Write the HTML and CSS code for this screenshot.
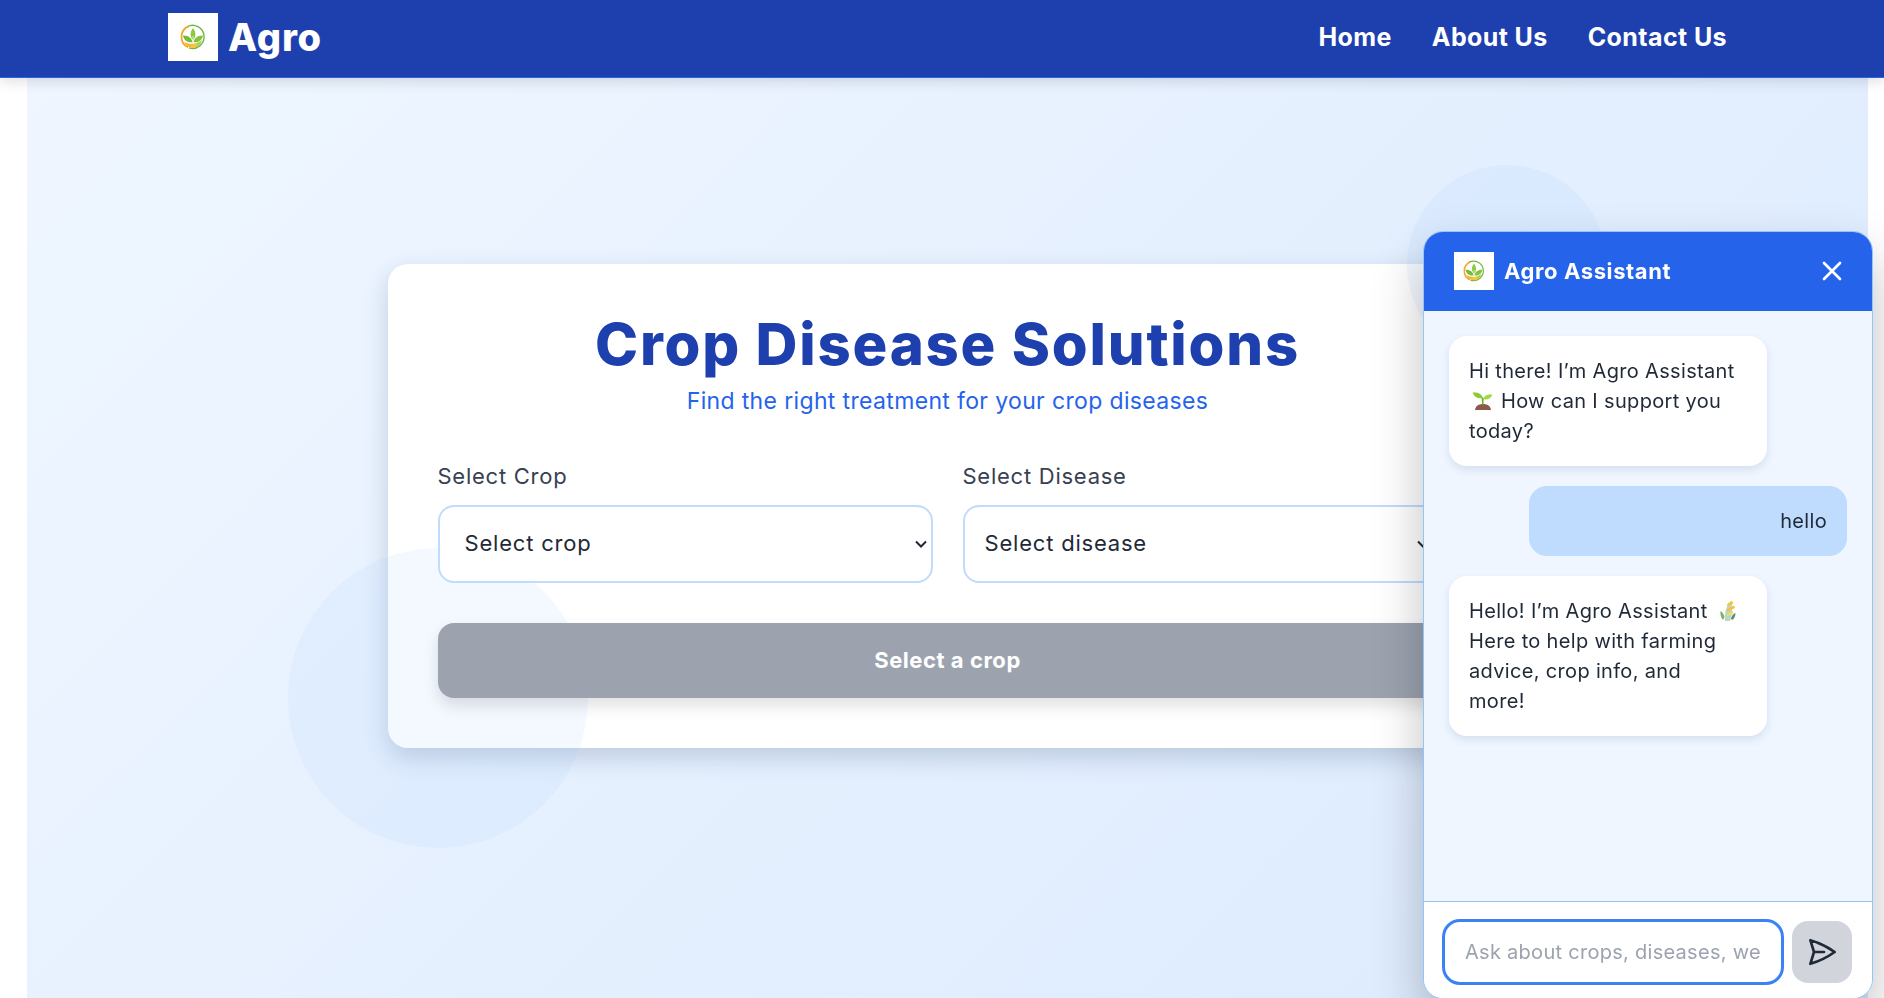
FILE: index.html
```html
<!DOCTYPE html>
<html lang="en">
<head>
    <meta charset="UTF-8">
    <meta name="viewport" content="width=device-width, initial-scale=1.0">
    <title>Agro - Crop Disease Solutions</title>
    <link rel="stylesheet" href="styles.css">
</head>
<body>
    <svg class="defs" width="0" height="0" aria-hidden="true">
        <defs>
            <linearGradient id="ring" x1="0" y1="0" x2="1" y2="0">
                <stop offset="0" stop-color="#f5a623"/>
                <stop offset="0.6" stop-color="#f6c945"/>
                <stop offset="1" stop-color="#8cc63f"/>
            </linearGradient>
            <symbol id="agro-logo" viewBox="0 0 26 26">
                <path d="M7 2.800A11.500 11.500 0 1 1 9 23.800" fill="none" stroke="#6cb83f" stroke-width="1.400"/>
                <path d="M8.500 2.400A11.500 11.500 0 0 0 8 23.300" fill="none" stroke="#f4a62a" stroke-width="1.800"/>
                <path d="M4 17.500c4 3 11 3.500 18-1-2 5.500-6.500 8-10 7.500-3.500-.5-6.500-3-8-6.500z" fill="url(#ring)"/>
                <path d="M13 16c-3-3-3.500-7.500 0-12 3.500 4.500 3 9 0 12z" fill="#8fc93f"/>
                <path d="M12.600 18c-1-4-4.600-7-9.600-6.500.8 4.800 5 7.800 9.600 6.500z" fill="#74bb3c"/>
                <path d="M13.400 18c1-4 4.600-7 9.600-6.500-.8 4.800-5 7.800-9.600 6.500z" fill="#82c341"/>
                <path d="M13 12v7" stroke="#e4f2cf" stroke-width=".8"/>
            </symbol>
        </defs>
    </svg>

    <header class="navbar">
        <div class="brand">
            <span class="brand-logo"><svg width="26" height="26"><use href="#agro-logo"/></svg></span>
            <span class="brand-name">Agro</span>
        </div>
        <nav class="nav-links">
            <a href="#">Home</a>
            <a href="#">About Us</a>
            <a href="#">Contact Us</a>
        </nav>
    </header>

    <main class="hero">
        <section class="card">
            <h1>Crop Disease Solutions</h1>
            <p class="subtitle">Find the right treatment for your crop diseases</p>
            <div class="fields">
                <div class="field">
                    <label for="crop">Select Crop</label>
                    <div class="select-wrap crop-wrap">
                        <select id="crop">
                            <option>Select crop</option>
                        </select>
                        <svg class="chevron" width="12" height="8" viewBox="0 0 12 8" fill="none" stroke="#1f2937" stroke-width="2"><path d="M1 1.500l5 5 5-5"/></svg>
                    </div>
                </div>
                <div class="field">
                    <label for="disease">Select Disease</label>
                    <div class="select-wrap disease-wrap">
                        <select id="disease">
                            <option>Select disease</option>
                        </select>
                        <svg class="chevron" width="12" height="8" viewBox="0 0 12 8" fill="none" stroke="#1f2937" stroke-width="2"><path d="M1 1.500l5 5 5-5"/></svg>
                    </div>
                </div>
            </div>
            <button class="submit-btn" disabled>Select a crop</button>
        </section>
        <div class="circle circle-left"></div>
        <div class="circle circle-right"></div>
    </main>

    <aside class="chat">
        <div class="chat-header">
            <div class="chat-title">
                <span class="chat-logo"><svg width="22" height="22"><use href="#agro-logo"/></svg></span>
                <span>Agro Assistant</span>
            </div>
            <svg class="chat-close" width="32" height="32" viewBox="0 0 24 24" fill="none" stroke="#fff" stroke-width="2" stroke-linecap="round"><path d="M6 18 18 6M6 6l12 12"/></svg>
        </div>
        <div class="chat-messages">
            <div class="msg msg-bot">Hi there! I’m Agro Assistant
                <svg class="emoji" width="24" height="24" viewBox="0 0 24 24"><path d="M4 21c.5-4 3.500-6 8-6s7.500 2 8 6z" fill="#8b5a4a"/><path d="M11 16c0-3 0-5-.5-7h2.500c-.5 2-.5 4-.5 7z" fill="#6fae2c"/><path d="M12 9C11 5 7 3 1.500 3.500 3 8 7 10 12 9z" fill="#8ccb32"/><path d="M12 10c1-3 4-5 9.500-4.500C20 9.500 16 11.500 12 10z" fill="#a3d93a"/></svg>
                How can I support you today?</div>
            <div class="msg msg-user">hello</div>
            <div class="msg msg-bot">Hello! I’m Agro Assistant
                <svg class="emoji" width="24" height="24" viewBox="0 0 24 24"><path d="M7 21c-2-2-3-6-2.500-9 2 1 3.500 3.500 4 6z" fill="#7fb069"/><path d="M16 21c2-1 3.500-4 3.500-7-2 .5-4 3-4.500 5.500z" fill="#4f8f7a"/><path d="M9 22c-.5-7 .5-15 6-20 2 4 1.500 13-1 20z" fill="#b7d8c4"/><path d="M11 5l5-3 1.500 2.500-6 2.500zM11 10l7-3.500 1 2.500-8 3.500z" fill="#fbc02d"/><path d="M11 15l6-3 .5 2.500-6.500 3z" fill="#fdd663"/></svg>
                Here to help with farming advice, crop info, and more!</div>
        </div>
        <div class="chat-input">
            <input type="text" placeholder="Ask about crops, diseases, weather...">
            <button class="send-btn" aria-label="Send">
                <svg width="32" height="32" viewBox="0 0 24 24" fill="none" stroke="#1f2937" stroke-width="2" stroke-linecap="round" stroke-linejoin="round"><path d="M6 12 3.269 3.125A59.769 59.769 0 0 1 21.485 12 59.768 59.768 0 0 1 3.270 20.875L5.999 12Zm0 0h7.500"/></svg>
            </button>
        </div>
    </aside>
</body>
</html>
```

FILE: styles.css
```css
* {
    box-sizing: border-box;
}
html, body {
    height: 100%;
}
body {
    margin: 0;
    background: #fff;
    font-family: 'Inter', 'Open Sans', sans-serif;
    color: #1f2937;
    overflow: hidden;
}
.defs {
    display: block;
    height: 0;
}
.navbar {
    position: relative;
    z-index: 5;
    height: 78px;
    padding: 0 157px 3px 168px;
    display: flex;
    justify-content: space-between;
    align-items: center;
    background: #1e40af;
    border-bottom: 1px solid #2563eb;
    box-shadow: 0 4px 12px rgba(0, 0, 0, 0.12);
}
.brand {
    display: flex;
    align-items: center;
    gap: 10px;
}
.brand-logo {
    width: 50px;
    height: 48px;
    background: #fff;
    display: flex;
    justify-content: center;
    align-items: center;
}
.brand-name {
    font-size: 38px;
    font-weight: 800;
    letter-spacing: 0.8px;
    color: #fff;
}
.nav-links {
    display: flex;
    gap: 40px;
}
.nav-links a {
    font-size: 25px;
    font-weight: 700;
    letter-spacing: 0.4px;
    color: #fff;
    text-decoration: none;
}
.hero {
    position: relative;
    margin: 0 16px 0 27px;
    height: 920px;
    padding-top: 186px;
    display: flex;
    flex-direction: column;
    align-items: center;
    background: linear-gradient(135deg, #eff6ff, #dbeafe);
}
.card {
    width: 1120px;
    padding: 50px;
    background: #fff;
    border-radius: 20px;
    box-shadow: 0 10px 25px rgba(30, 58, 100, 0.2);
}
.card > * {
    position: relative;
    z-index: 1;
}
.card h1 {
    margin: 0;
    font-size: 58px;
    line-height: 60px;
    font-weight: 800;
    letter-spacing: 1.8px;
    color: #1e40af;
    text-align: center;
}
.subtitle {
    margin: 12px 0 0;
    font-size: 23px;
    line-height: 30px;
    letter-spacing: 0.35px;
    color: #2563eb;
    text-align: center;
}
.fields {
    margin-top: 45px;
    display: grid;
    grid-template-columns: 1fr 1fr;
    gap: 30px;
}
.field label {
    display: block;
    font-size: 22px;
    line-height: 30px;
    letter-spacing: 0.75px;
    color: #374151;
}
.select-wrap {
    position: relative;
    margin-top: 14px;
}
.select-wrap select {
    display: block;
    width: 100%;
    height: 78px;
    padding-bottom: 2px;
    appearance: none;
    font-family: inherit;
    font-size: 22px;
    letter-spacing: 0.8px;
    color: #1f2937;
    background: #fff;
    border: 2px solid #bfdbfe;
    border-radius: 16px;
}
.crop-wrap select {
    padding-left: 25px;
}
.disease-wrap select {
    padding-left: 20px;
}
.chevron {
    position: absolute;
    top: 35px;
    pointer-events: none;
}
.crop-wrap .chevron {
    right: 6px;
}
.disease-wrap .chevron {
    right: 29px;
}
.submit-btn {
    display: block;
    width: 100%;
    height: 75px;
    margin-top: 40px;
    padding-bottom: 2px;
    font-family: inherit;
    font-size: 22px;
    font-weight: 700;
    letter-spacing: 0.55px;
    color: #fff;
    background: #9ca3af;
    border: none;
    border-radius: 16px;
    box-shadow: 0 8px 16px rgba(0, 0, 0, 0.12);
}
.circle {
    position: absolute;
    border-radius: 50%;
    background: rgba(147, 197, 253, 0.1);
}
.circle-left {
    left: 261px;
    top: 470px;
    width: 300px;
    height: 300px;
}
.circle-right {
    left: 1380px;
    top: 87px;
    width: 200px;
    height: 200px;
}
.chat {
    position: fixed;
    z-index: 10;
    top: 231px;
    right: 11px;
    width: 450px;
    height: 768px;
    display: flex;
    flex-direction: column;
    background: #eff6ff;
    border: 1px solid #93c5fd;
    border-radius: 20px;
    overflow: hidden;
    box-shadow: 0 25px 50px rgba(0, 0, 0, 0.25);
}
.chat-header {
    height: 79px;
    padding: 0 24px 2px 30px;
    display: flex;
    justify-content: space-between;
    align-items: center;
    background: #2563eb;
    color: #fff;
}
.chat-title {
    display: flex;
    align-items: center;
    gap: 10px;
    font-size: 22px;
    font-weight: 700;
    letter-spacing: 0.6px;
}
.chat-logo {
    width: 40px;
    height: 38px;
    background: #fff;
    display: flex;
    justify-content: center;
    align-items: center;
}
.chat-messages {
    flex: 1;
    padding: 25px 25px 0;
    display: flex;
    flex-direction: column;
    gap: 20px;
}
.msg {
    width: 318px;
    padding: 20px;
    font-size: 20px;
    line-height: 30px;
    letter-spacing: 0.33px;
    color: #1f2937;
    border-radius: 18px;
}
.msg-bot {
    padding-right: 27px;
    background: #fff;
    box-shadow: 0 4px 8px rgba(30, 64, 120, 0.12);
}
.msg-user {
    align-self: flex-end;
    background: #bfdbfe;
    text-align: right;
}
.emoji {
    vertical-align: -5px;
    margin-left: 2px;
}
.chat-input {
    height: 97px;
    padding: 4px 20px 0 18px;
    display: flex;
    align-items: center;
    gap: 8px;
    background: #fff;
    border-top: 1px solid #93c5fd;
}
.chat-input input {
    flex: 1;
    min-width: 0;
    height: 66px;
    padding: 0 20px;
    font-family: inherit;
    font-size: 20px;
    letter-spacing: 0.28px;
    border: 3px solid #3b82f6;
    border-radius: 18px;
    outline: none;
}
.chat-input input::placeholder {
    color: #9ca3af;
}
.send-btn {
    width: 60px;
    height: 62px;
    padding: 0;
    display: flex;
    justify-content: center;
    align-items: center;
    background: #d1d5db;
    border: none;
    border-radius: 16px;
}
```
